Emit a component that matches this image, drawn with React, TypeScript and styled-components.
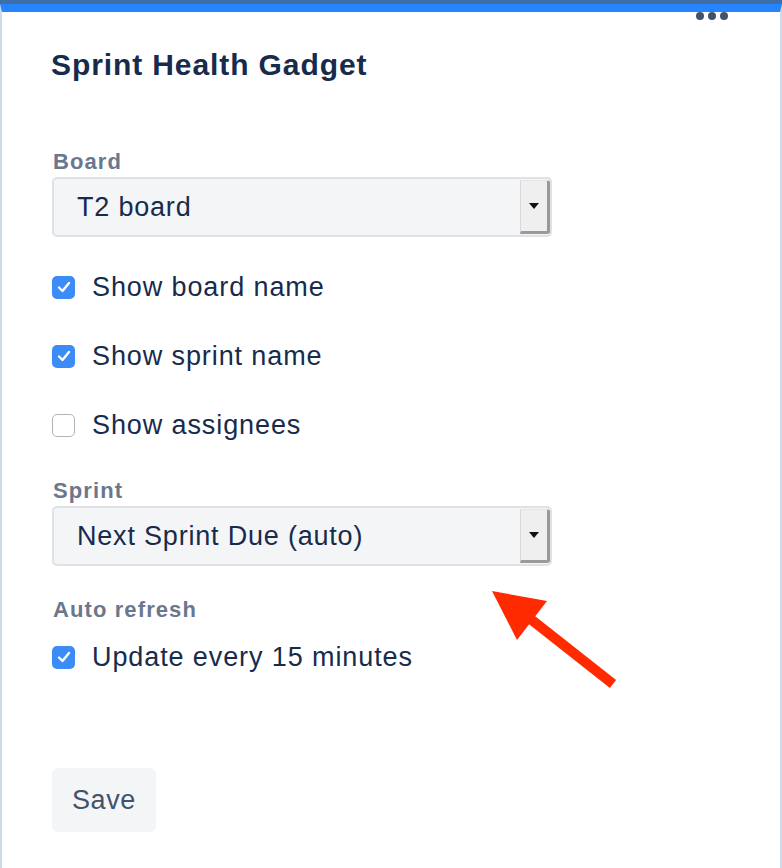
import React from "react";
import styled, { createGlobalStyle } from "styled-components";

const Global = createGlobalStyle`
  html, body { margin: 0; padding: 0; background: #ffffff; }
  body { font-family: "Liberation Sans", Arial, sans-serif; }
  * { box-sizing: border-box; }
`;

const Frame = styled.div`
  width: 782px;
  height: 868px;
  border-top: 4px solid #3d6ea8;
  background: #ffffff;
  position: relative;
  overflow: hidden;
`;

const Card = styled.div`
  height: 864px;
  border-top: 8px solid #2684ff;
  border-left: 2px solid #ccdbea;
  border-right: 2px solid #ccdbea;
  display: flex;
  flex-direction: column;
  padding: 0 0 0 49px;
`;

const Header = styled.div`
  display: flex;
  justify-content: flex-end;
  padding-right: 52px;
  height: 8px;
`;

const Dots = styled.div`
  display: flex;
  gap: 4px;
`;

const Dot = styled.span`
  width: 8px;
  height: 8px;
  border-radius: 50%;
  background: #42526e;
`;

const Title = styled.h1`
  margin: 29px 0 0 0;
  font-size: 30px;
  line-height: 32px;
  font-weight: 700;
  color: #172b4d;
  letter-spacing: 0.9px;
`;

const Form = styled.div`
  display: flex;
  flex-direction: column;
  margin-top: 69px;
  padding-left: 1px;
`;

const Label = styled.div<{ $top?: number }>`
  font-size: 22px;
  line-height: 24px;
  font-weight: 700;
  color: #6b778c;
  letter-spacing: 1.1px;
  margin-top: ${(p) => p.$top ?? 0}px;
  margin-left: 1px;
`;

const Select = styled.div`
  margin-top: 3px;
  width: 500px;
  height: 60px;
  background: #f4f5f7;
  border: 2px solid #dfe1e6;
  border-radius: 5px;
  display: flex;
  align-items: center;
`;

const SelectValue = styled.span`
  flex: 1;
  padding-left: 23px;
  font-size: 27px;
  letter-spacing: 0.8px;
  color: #172b4d;
`;

const DropButton = styled.span`
  width: 30px;
  height: 54px;
  background: #efefef;
  border-left: 1px solid #d8d8d8;
  border-right: 3px solid #999999;
  border-bottom: 3px solid #9a9a9a;
  border-top: 1px solid #e4e4e4;
  border-radius: 0 3px 3px 0;
  display: flex;
  align-items: center;
  justify-content: center;
`;

const Caret = styled.span`
  width: 0;
  height: 0;
  border-left: 5px solid transparent;
  border-right: 5px solid transparent;
  border-top: 6px solid #111111;
`;

const CheckRow = styled.label<{ $top: number }>`
  display: flex;
  align-items: center;
  gap: 17px;
  margin-top: ${(p) => p.$top}px;
  height: 30px;
`;

const Box = styled.span<{ $on: boolean }>`
  width: 23px;
  height: 23px;
  border-radius: 5px;
  background: ${(p) => (p.$on ? "#3b8cf6" : "#ffffff")};
  border: ${(p) => (p.$on ? "none" : "1.5px solid #b3b3b3")};
  display: flex;
  align-items: center;
  justify-content: center;
  flex-shrink: 0;
`;

const CheckText = styled.span`
  font-size: 27px;
  letter-spacing: 0.9px;
  color: #172b4d;
`;

const SaveButton = styled.button`
  margin-top: 96px;
  width: 104px;
  height: 64px;
  border: none;
  border-radius: 6px;
  background: #f4f5f7;
  color: #42526e;
  font-family: "Liberation Sans", Arial, sans-serif;
  font-size: 27px;
  letter-spacing: 0.6px;
  padding: 0;
  align-self: flex-start;
`;

const ArrowOverlay = styled.svg`
  position: absolute;
  left: 480px;
  top: 575px;
`;

const Check = ({ on }: { on: boolean }) => (
  <Box $on={on}>
    {on && (
      <svg width="14" height="12" viewBox="0 0 14 12">
        <path d="M2 6.5 L5.5 10 L12 2" fill="none" stroke="#ffffff" strokeWidth="2.4" strokeLinecap="round" strokeLinejoin="round" />
      </svg>
    )}
  </Box>
);

const SelectBox = ({ value }: { value: string }) => (
  <Select>
    <SelectValue>{value}</SelectValue>
    <DropButton>
      <Caret />
    </DropButton>
  </Select>
);

export default function App() {
  return (
    <>
      <Global />
      <Frame>
        <Card>
          <Header>
            <Dots>
              <Dot />
              <Dot />
              <Dot />
            </Dots>
          </Header>
          <Title>Sprint Health Gadget</Title>
          <Form>
            <Label>Board</Label>
            <SelectBox value="T2 board" />
            <CheckRow $top={35}>
              <Check on={true} />
              <CheckText>Show board name</CheckText>
            </CheckRow>
            <CheckRow $top={39}>
              <Check on={true} />
              <CheckText>Show sprint name</CheckText>
            </CheckRow>
            <CheckRow $top={39}>
              <Check on={false} />
              <CheckText>Show assignees</CheckText>
            </CheckRow>
            <Label $top={39}>Sprint</Label>
            <SelectBox value="Next Sprint Due (auto)" />
            <Label $top={32}>Auto refresh</Label>
            <CheckRow $top={20}>
              <Check on={true} />
              <CheckText>Update every 15 minutes</CheckText>
            </CheckRow>
            <SaveButton>Save</SaveButton>
          </Form>
        </Card>
        <ArrowOverlay width="150" height="120" viewBox="0 0 150 120">
          <polygon points="12,12 67,22 37,61" fill="#ff2a00" />
          <line x1="48" y1="38" x2="133" y2="105" stroke="#ff2a00" strokeWidth="10" />
        </ArrowOverlay>
      </Frame>
    </>
  );
}
